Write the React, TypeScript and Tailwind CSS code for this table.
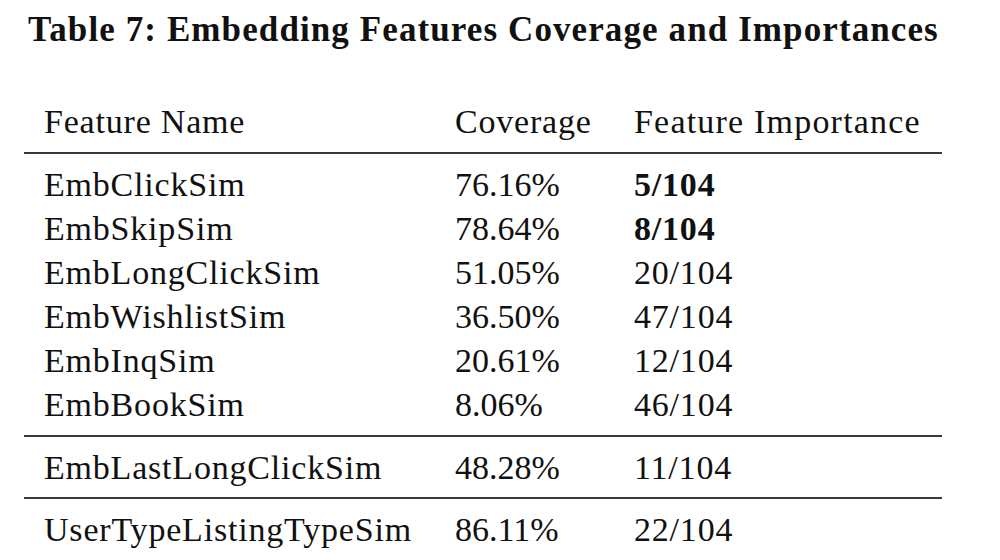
const rows: [string, string, string, boolean][] = [
  ["EmbClickSim", "76.16%", "5/104", true],
  ["EmbSkipSim", "78.64%", "8/104", true],
  ["EmbLongClickSim", "51.05%", "20/104", false],
  ["EmbWishlistSim", "36.50%", "47/104", false],
  ["EmbInqSim", "20.61%", "12/104", false],
  ["EmbBookSim", "8.06%", "46/104", false],
];

function Row({ name, cov, imp, bold, head }: { name: string; cov: string; imp: string; bold?: boolean; head?: boolean }) {
  return (
    <div className="grid grid-cols-[411px_179px_1fr] h-[44px] items-center leading-[44px] whitespace-nowrap">
      <span>{name}</span>
      <span className={head ? "" : "tracking-normal"}>{cov}</span>
      <span className={bold ? "font-bold" : head ? "tracking-[1.2px]" : ""}>{imp}</span>
    </div>
  );
}

export default function App() {
  return (
    <div className="w-[1000px] h-[560px] bg-white text-[#111] font-['Liberation_Serif',serif] overflow-hidden">
      <h1 className="pl-[28px] pt-[10px] text-[35px] leading-[40px] font-bold tracking-[1.1px] whitespace-nowrap">
        Table 7: Embedding Features Coverage and Importances
      </h1>

      <div className="mt-[50px] ml-[24px] w-[918px] text-[34px] tracking-[0.8px]">
        {/* header */}
        <div className="pl-[20px] pb-[8px]">
          <Row name="Feature Name" cov="Coverage" imp="Feature Importance" head />
        </div>
        <div className="h-[2px] bg-[#3a3a3a]" />

        <div className="pl-[20px] pt-[9px] pb-[8px]">
          {rows.map((r) => (
            <Row key={r[0]} name={r[0]} cov={r[1]} imp={r[2]} bold={r[3]} />
          ))}
        </div>
        <div className="h-[2px] bg-[#3a3a3a]" />

        <div className="pl-[20px] pt-[9px] pb-[7px]">
          <Row name="EmbLastLongClickSim" cov="48.28%" imp="11/104" />
        </div>
        <div className="h-[2px] bg-[#3a3a3a]" />

        <div className="pl-[20px] pt-[9px]">
          <Row name="UserTypeListingTypeSim" cov="86.11%" imp="22/104" />
        </div>
      </div>
    </div>
  );
}
